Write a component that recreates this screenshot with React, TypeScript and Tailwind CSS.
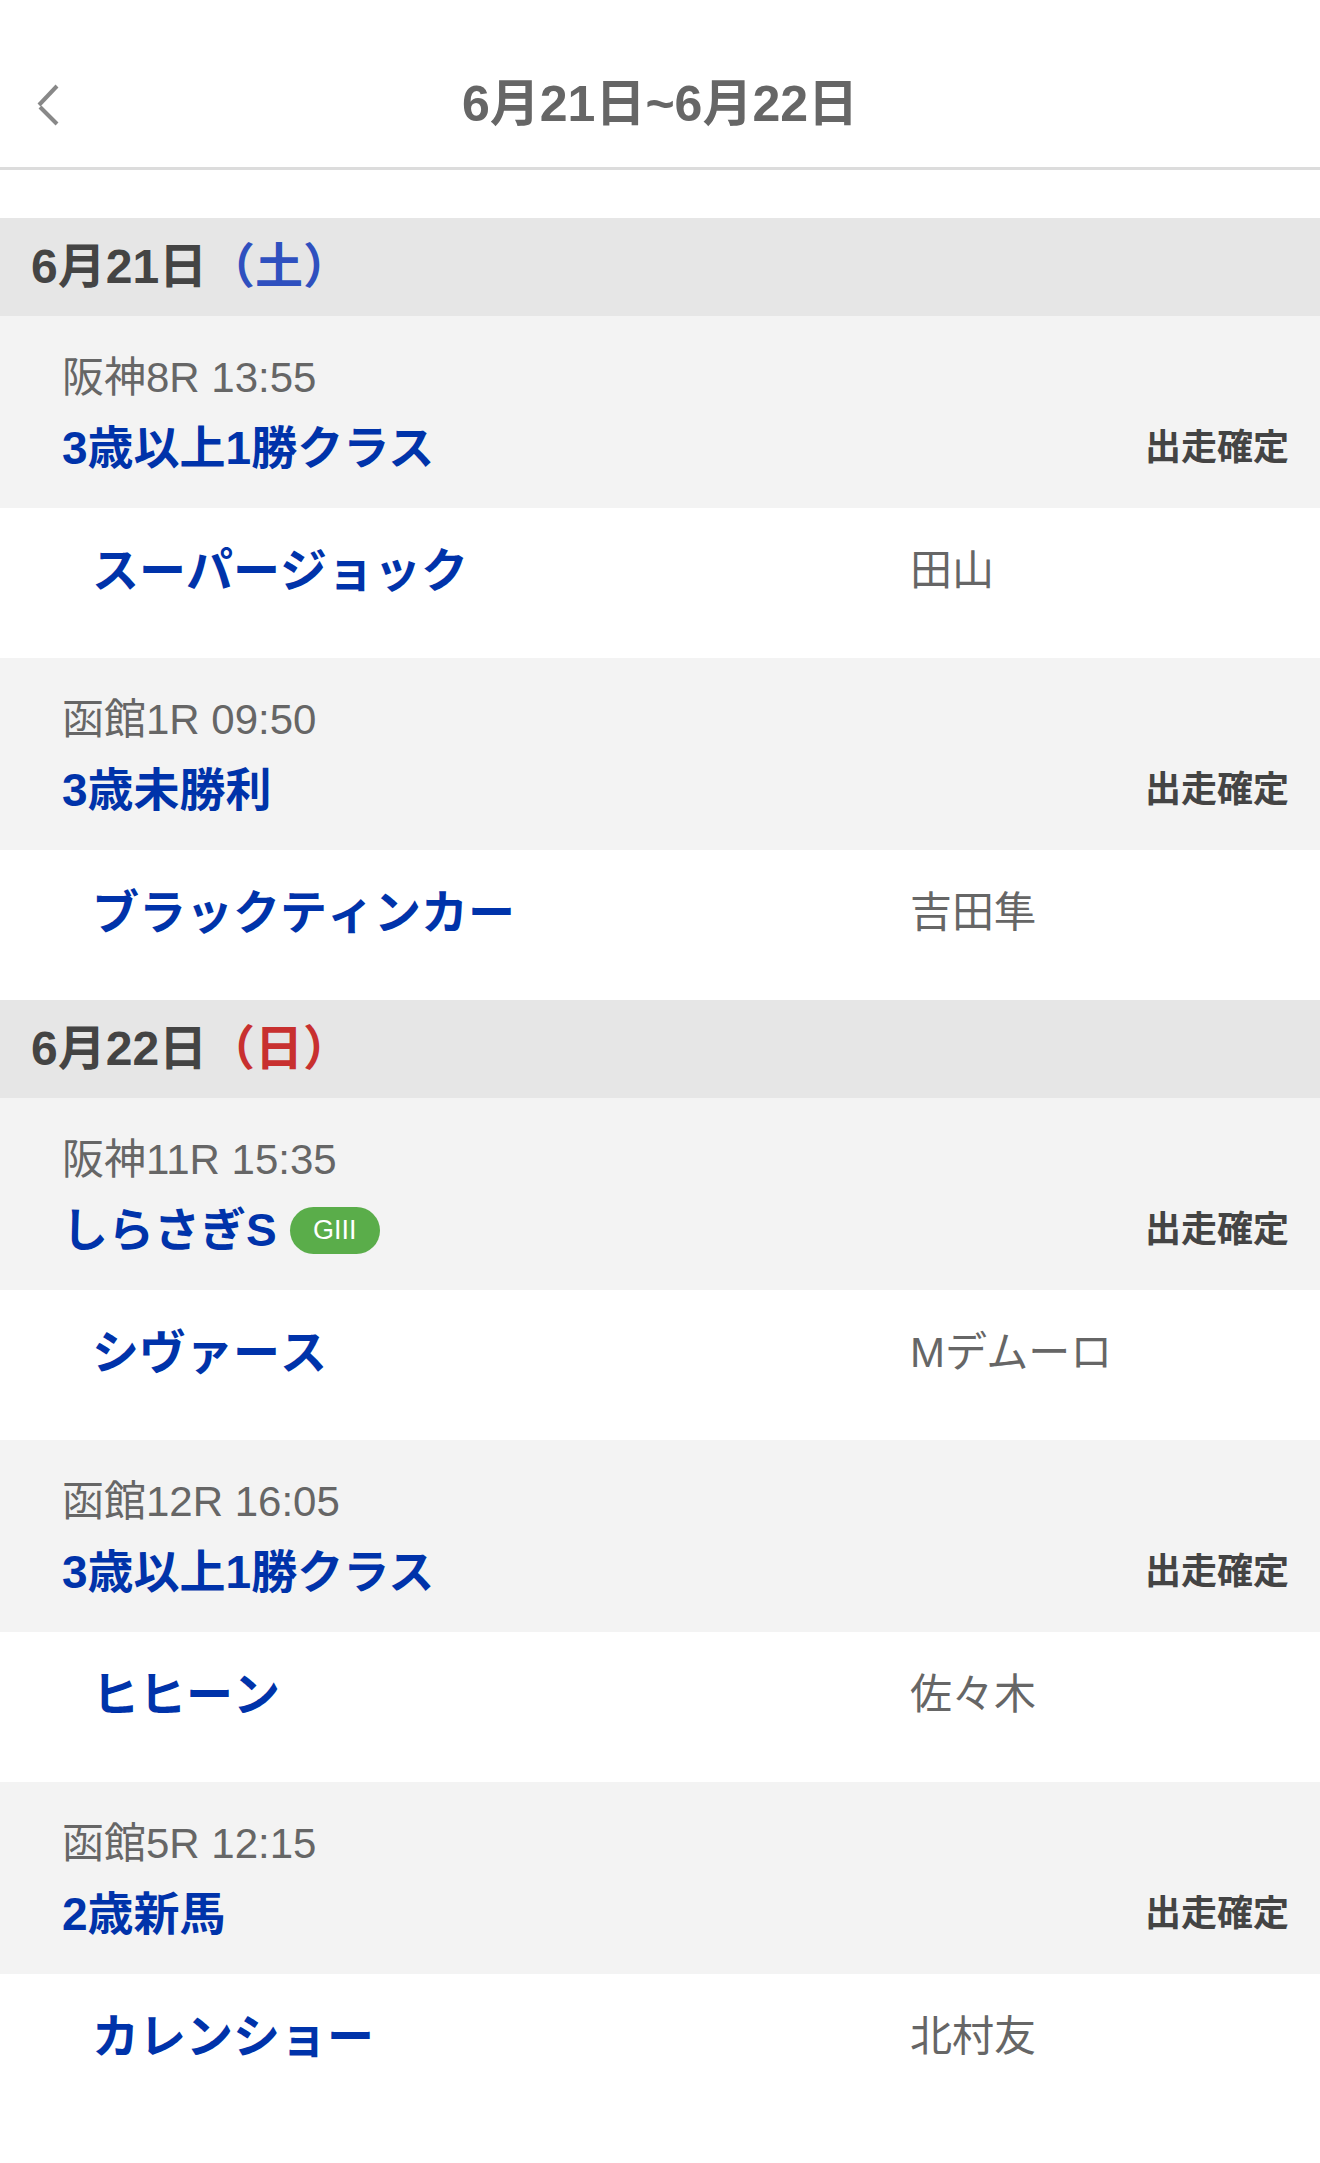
import React from "react";

type Race = {
  meta: string;
  name: string;
  grade?: string;
  status: string;
  horse: string;
  jockey: string;
};

type Day = {
  date: string;
  weekday: string;
  weekdayClass: string;
  races: Race[];
};

const days: Day[] = [
  {
    date: "6月21日",
    weekday: "（土）",
    weekdayClass: "text-[#2f50bf]",
    races: [
      {
        meta: "阪神8R 13:55",
        name: "3歳以上1勝クラス",
        status: "出走確定",
        horse: "スーパージョック",
        jockey: "田山",
      },
      {
        meta: "函館1R 09:50",
        name: "3歳未勝利",
        status: "出走確定",
        horse: "ブラックティンカー",
        jockey: "吉田隼",
      },
    ],
  },
  {
    date: "6月22日",
    weekday: "（日）",
    weekdayClass: "text-[#c8302f]",
    races: [
      {
        meta: "阪神11R 15:35",
        name: "しらさぎS",
        grade: "GIII",
        status: "出走確定",
        horse: "シヴァース",
        jockey: "Mデムーロ",
      },
      {
        meta: "函館12R 16:05",
        name: "3歳以上1勝クラス",
        status: "出走確定",
        horse: "ヒヒーン",
        jockey: "佐々木",
      },
      {
        meta: "函館5R 12:15",
        name: "2歳新馬",
        status: "出走確定",
        horse: "カレンショー",
        jockey: "北村友",
      },
    ],
  },
];

function BackIcon() {
  return (
    <svg width="24" height="42" viewBox="0 0 24 42" fill="none">
      <path d="M21 2 L3 21" stroke="#888888" strokeWidth="4" />
      <path d="M4 23 L21 40" stroke="#888888" strokeWidth="4" />
    </svg>
  );
}

function RaceBlock({ race }: { race: Race }) {
  return (
    <div>
      <div className="h-[192px] bg-[#f3f3f3] pl-[62px] pr-[31px] pt-[42px]">
        <p className="text-[42px] leading-[40px] text-[#666666]">{race.meta}</p>
        <div className="mt-[25px] flex h-[50px] items-center justify-between">
          <div className="flex items-center">
            <span className="text-[46px] font-bold leading-[50px] text-[#0033aa]">
              {race.name}
            </span>
            {race.grade && (
              <span className="ml-[13px] flex h-[47px] w-[90px] items-center justify-center rounded-full bg-[#5aad4a] text-[27px] text-white">
                {race.grade}
              </span>
            )}
          </div>
          <span className="text-[36px] font-bold text-[#444444]">{race.status}</span>
        </div>
      </div>
      <div className="flex h-[150px] bg-white pl-[92px] pt-[35px]">
        <span className="w-[818px] text-[47px] font-bold leading-[56px] text-[#0033aa] [font-kerning:none]">
          {race.horse}
        </span>
        <span className="text-[42px] leading-[56px] text-[#666666]">{race.jockey}</span>
      </div>
    </div>
  );
}

export default function App() {
  return (
    <div
      className="min-h-[2163px] w-full bg-white"
      style={{ fontFamily: '"Liberation Sans", "Noto Sans CJK JP", sans-serif' }}
    >
      <header className="grid h-[170px] grid-cols-[1fr_auto_1fr] items-center border-b-[3px] border-[#dcdcdc] pt-[42px]">
        <div className="pl-[36px]">
          <BackIcon />
        </div>
        <h1 className="text-[50px] font-bold text-[#666666]">6月21日~6月22日</h1>
        <div />
      </header>

      <div className="h-[48px]" />

      {days.map((day) => (
        <section key={day.date}>
          <div className="flex h-[98px] items-center bg-[#e6e6e6] pl-[31px]">
            <h2 className="text-[48px] font-bold text-[#444444]">
              {day.date}
              <span className={day.weekdayClass}>{day.weekday}</span>
            </h2>
          </div>
          {day.races.map((race) => (
            <RaceBlock key={race.meta} race={race} />
          ))}
        </section>
      ))}
    </div>
  );
}
